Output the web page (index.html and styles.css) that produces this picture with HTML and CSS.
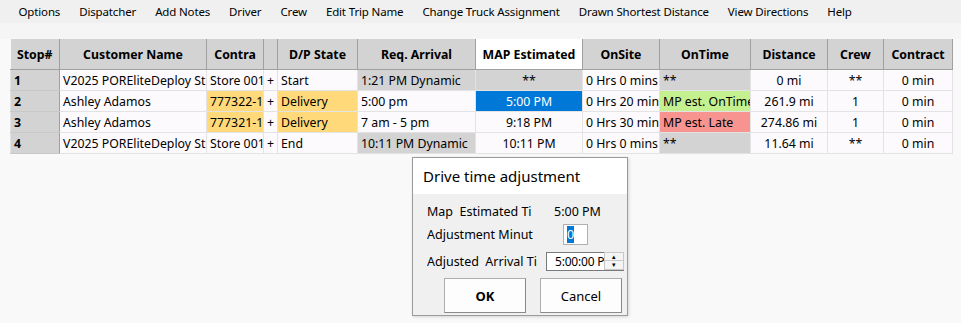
FILE: index.html
```html
<!DOCTYPE html>
<html lang="en">
<head>
    <meta charset="UTF-8">
    <meta name="viewport" content="width=device-width, initial-scale=1.0">
    <title>Trip Stops</title>
    <link rel="stylesheet" href="styles.css">
</head>
<body>
    <div class="menubar">
        <span class="menu-item">Options</span>
        <span class="menu-item">Dispatcher</span>
        <span class="menu-item">Add Notes</span>
        <span class="menu-item">Driver</span>
        <span class="menu-item">Crew</span>
        <span class="menu-item">Edit Trip Name</span>
        <span class="menu-item">Change Truck Assignment</span>
        <span class="menu-item">Drawn Shortest Distance</span>
        <span class="menu-item">View Directions</span>
        <span class="menu-item">Help</span>
    </div>
    <div class="workspace">
        <table class="grid">
            <colgroup>
                <col style="width: 49px">
                <col style="width: 147px">
                <col style="width: 57px">
                <col style="width: 14px">
                <col style="width: 80px">
                <col style="width: 118px">
                <col style="width: 107px">
                <col style="width: 77px">
                <col style="width: 91px">
                <col style="width: 77px">
                <col style="width: 56px">
                <col style="width: 69px">
            </colgroup>
            <thead>
                <tr>
                    <th>Stop#</th>
                    <th>Customer Name</th>
                    <th>Contra</th>
                    <th></th>
                    <th>D/P State</th>
                    <th>Req. Arrival</th>
                    <th class="selected-head">MAP Estimated</th>
                    <th>OnSite</th>
                    <th>OnTime</th>
                    <th>Distance</th>
                    <th>Crew</th>
                    <th>Contract</th>
                </tr>
            </thead>
            <tbody>
                <tr>
                    <td class="stop">1</td>
                    <td>V2025 POREliteDeploy Store</td>
                    <td>Store 001</td>
                    <td class="plus">+</td>
                    <td>Start</td>
                    <td class="gray">1:21 PM Dynamic</td>
                    <td class="gray center">**</td>
                    <td>0 Hrs 0 mins</td>
                    <td class="gray">**</td>
                    <td class="center">0 mi</td>
                    <td class="center">**</td>
                    <td class="center">0 min</td>
                </tr>
                <tr>
                    <td class="stop">2</td>
                    <td>Ashley Adamos</td>
                    <td class="amber">777322-1</td>
                    <td class="plus">+</td>
                    <td class="amber">Delivery</td>
                    <td>5:00 pm</td>
                    <td class="active center">5:00 PM</td>
                    <td>0 Hrs 20 mins</td>
                    <td class="ok">MP est. OnTime</td>
                    <td class="center">261.9 mi</td>
                    <td class="center">1</td>
                    <td class="center">0 min</td>
                </tr>
                <tr>
                    <td class="stop">3</td>
                    <td>Ashley Adamos</td>
                    <td class="amber">777321-1</td>
                    <td class="plus">+</td>
                    <td class="amber">Delivery</td>
                    <td>7 am - 5 pm</td>
                    <td class="center">9:18 PM</td>
                    <td>0 Hrs 30 mins</td>
                    <td class="late">MP est. Late</td>
                    <td class="center">274.86 mi</td>
                    <td class="center">1</td>
                    <td class="center">0 min</td>
                </tr>
                <tr>
                    <td class="stop">4</td>
                    <td>V2025 POREliteDeploy Store</td>
                    <td>Store 001</td>
                    <td class="plus">+</td>
                    <td>End</td>
                    <td class="gray">10:11 PM Dynamic</td>
                    <td class="center">10:11 PM</td>
                    <td>0 Hrs 0 mins</td>
                    <td class="gray">**</td>
                    <td class="center">11.64 mi</td>
                    <td class="center">**</td>
                    <td class="center">0 min</td>
                </tr>
            </tbody>
        </table>

        <div class="dialog">
            <div class="dialog-title">Drive time adjustment</div>
            <div class="dialog-body">
                <div class="field">
                    <span class="label">Map&nbsp; Estimated Ti</span>
                    <span class="value">5:00 PM</span>
                </div>
                <div class="field field-minutes">
                    <span class="label">Adjustment Minut</span>
                    <span class="minutes"><span class="sel">0</span></span>
                </div>
                <div class="field field-arrival">
                    <span class="label">Adjusted&nbsp; Arrival Ti</span>
                    <span class="spinner">
                        <span class="spin-text">5:00:00 PM</span>
                        <span class="spin-btns">
                            <span class="spin-btn">&#9652;</span>
                            <span class="spin-btn">&#9662;</span>
                        </span>
                    </span>
                </div>
                <div class="buttons">
                    <button class="btn btn-ok">OK</button>
                    <button class="btn">Cancel</button>
                </div>
            </div>
        </div>
    </div>
</body>
</html>
```

FILE: styles.css
```css
body {
    margin: 0;
    padding: 0;
    font-family: "Noto Sans", "Open Sans", sans-serif;
    font-size: 12.3px;
    color: #000;
    background-color: #f9f9f9;
    height: 323px;
    overflow: hidden;
}
.menubar {
    display: flex;
    height: 23px;
    align-items: center;
    padding-left: 9px;
    background-color: #f0f0f0;
    font-size: 11.5px;
    letter-spacing: -0.15px;
}
.menu-item {
    padding: 0 9.5px;
    white-space: nowrap;
}
.workspace {
    position: relative;
    padding: 16px 0 0 10px;
    height: 284px;
    background: linear-gradient(#f5f5f5, #f5f5f5) top / 100% 16px no-repeat, #f9f9f9;
}
.grid {
    border-collapse: collapse;
    table-layout: fixed;
    width: 942px;
    border-bottom: 1px solid #a0a0a0;
}
.grid th {
    height: 30px;
    padding: 0 2px;
    background-color: #d3d3d3;
    font-weight: bold;
    text-align: center;
    white-space: nowrap;
    overflow: hidden;
    border-right: 1px solid #a0a0a0;
    border-bottom: 1px solid #a0a0a0;
}
.grid th.selected-head {
    background-color: #fff;
}
.grid td {
    height: 20px;
    padding: 0 0 0 3px;
    background-color: #fdfafd;
    border: 1px solid #e3e3e3;
    white-space: nowrap;
    overflow: hidden;
}
.grid td.stop {
    background-color: #d3d3d3;
    font-weight: bold;
    border-right: 1px solid #a0a0a0;
    border-bottom-color: #c8c8c8;
}
.grid td.plus {
    padding: 0;
    text-align: center;
}
.grid td.center {
    text-align: center;
    padding: 0;
}
.grid td.gray {
    background-color: #d3d3d3;
}
.grid td.amber {
    background-color: #ffd97a;
}
.grid td.active {
    background-color: #0078d7;
    color: #fff;
}
.grid td.ok {
    background-color: #c5f08f;
}
.grid td.late {
    background-color: #f7948f;
}
.dialog {
    position: absolute;
    left: 412px;
    top: 134px;
    width: 214px;
    height: 157px;
    border: 1px solid #9a9a9a;
    background-color: #f0f0f0;
    box-shadow: 1px 1px 3px rgba(0, 0, 0, 0.15);
}
.dialog-title {
    height: 36px;
    line-height: 36px;
    padding-left: 10px;
    background-color: #fff;
    font-size: 15px;
}
.dialog-body {
    padding: 6px 0 0 14px;
    font-size: 12.5px;
}
.field {
    display: flex;
    align-items: center;
    height: 22px;
}
.field-minutes {
    margin-top: 1px;
}
.field-arrival {
    margin-top: 5px;
}
.label {
    width: 119px;
    white-space: nowrap;
    overflow: hidden;
}
.value {
    margin-left: 8px;
}
.minutes {
    display: inline-block;
    margin-left: 17px;
    width: 25px;
    height: 21px;
    border: 1px solid #b0b0b0;
    background-color: #fff;
    line-height: 19px;
    padding-left: 3px;
    box-sizing: border-box;
}
.sel {
    background-color: #0078d7;
    color: #fff;
}
.spinner {
    display: flex;
    width: 78px;
    height: 19px;
    border: 1px solid #7a7a7a;
    background-color: #fff;
    box-sizing: border-box;
}
.spin-text {
    flex: 1;
    overflow: hidden;
    white-space: nowrap;
    padding-left: 8px;
    line-height: 17px;
    font-size: 12px;
    letter-spacing: -0.2px;
}
.spin-btns {
    display: flex;
    flex-direction: column;
    width: 19px;
}
.spin-btn {
    flex: 1;
    font-size: 7px;
    line-height: 7px;
    text-align: center;
    background-color: #f4f4f4;
    border: 1px solid #c8c8c8;
    margin: -1px -1px 0 0;
}
.buttons {
    display: flex;
    gap: 14px;
    margin: 6px 0 0 17px;
}
.btn {
    width: 82px;
    height: 35px;
    font-family: inherit;
    font-size: 13px;
    background-color: #fdfdfd;
    border: 1px solid #adadad;
    border-right-color: #8a8a8a;
    border-bottom-color: #8a8a8a;
    padding: 0;
}
.btn-ok {
    font-weight: bold;
}
```
